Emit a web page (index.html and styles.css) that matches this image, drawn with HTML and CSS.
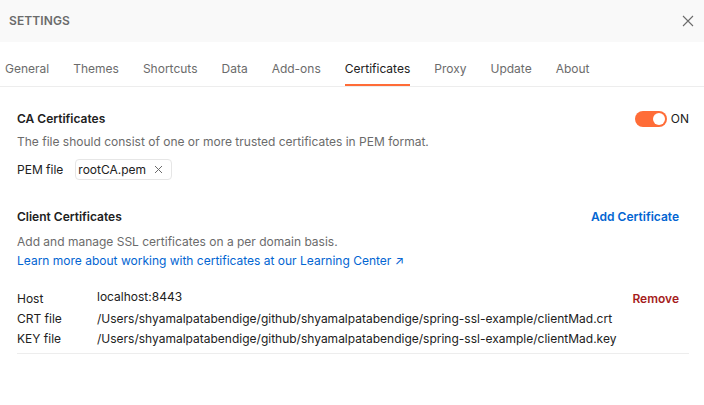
FILE: index.html
```html
<!DOCTYPE html>
<html>
<head>
<meta charset="utf-8">
<link rel="stylesheet" href="styles.css">
</head>
<body>
<div class="modal">
  <header class="header">
    <span class="header-title">SETTINGS</span>
    <button class="close" aria-label="Close">
      <svg width="12" height="12" viewBox="0 0 12 12"><path d="M1 1L11 11M11 1L1 11" stroke="#6b6b6b" stroke-width="1.1" fill="none"/></svg>
    </button>
  </header>
  <nav class="tabs">
    <span class="tab">General</span>
    <span class="tab">Themes</span>
    <span class="tab">Shortcuts</span>
    <span class="tab">Data</span>
    <span class="tab">Add-ons</span>
    <span class="tab active">Certificates</span>
    <span class="tab">Proxy</span>
    <span class="tab">Update</span>
    <span class="tab">About</span>
  </nav>
  <main class="content">
    <section class="ca">
      <div class="section-head">
        <h2 class="section-title">CA Certificates</h2>
        <div class="toggle-wrap">
          <span class="toggle"><span class="knob"></span></span>
          <span class="toggle-label">ON</span>
        </div>
      </div>
      <p class="desc">The file should consist of one or more trusted certificates in PEM format.</p>
      <div class="pem-row">
        <span class="pem-label">PEM file</span>
        <span class="chip">rootCA.pem
          <svg class="chip-x" width="9" height="9" viewBox="0 0 9 9"><path d="M1 1L8 8M8 1L1 8" stroke="#6b6b6b" stroke-width="1" fill="none"/></svg>
        </span>
      </div>
    </section>
    <section class="client">
      <div class="section-head">
        <h2 class="section-title">Client Certificates</h2>
        <span class="add-btn">Add Certificate</span>
      </div>
      <p class="desc tight">Add and manage SSL certificates on a per domain basis.</p>
      <a class="link">Learn more about working with certificates at our Learning Center <span class="arrow">↗</span></a>
      <div class="cert">
        <div class="cert-grid">
          <span class="k">Host</span><span class="v host">localhost:8443</span>
          <span class="k">CRT file</span><span class="v">/Users/shyamalpatabendige/github/shyamalpatabendige/spring-ssl-example/clientMad.crt</span>
          <span class="k">KEY file</span><span class="v">/Users/shyamalpatabendige/github/shyamalpatabendige/spring-ssl-example/clientMad.key</span>
        </div>
        <span class="remove">Remove</span>
      </div>
    </section>
  </main>
</div>
</body>
</html>
```
FILE: styles.css
```css
* { box-sizing: border-box; }
html, body { margin: 0; padding: 0; background: #ffffff; }
body {
  font-family: Inter, "Noto Sans", sans-serif;
  font-size: 12px;
  color: #212121;
  width: 704px;
  height: 405px;
  overflow: hidden;
}
.header {
  height: 42px;
  background: #f9f9f9;
  display: flex;
  align-items: center;
  justify-content: space-between;
  padding: 0 10px 0 9px;
}
.header-title {
  font-size: 12px;
  font-weight: 600;
  color: #6b6b6b;
  letter-spacing: 0.1px;
  line-height: 16px;
}
.close {
  border: 0;
  background: none;
  padding: 0;
  width: 12px;
  height: 12px;
  display: flex;
}
.tabs {
  display: flex;
  gap: 24px;
  padding-left: 5px;
  border-bottom: 1px solid #ededed;
  height: 45px;
}
.tab {
  padding-top: 19px;
  line-height: 15px;
  height: 44px;
  color: #6b6b6b;
  border-bottom: 2px solid transparent;
  font-size: 12px;
}
.tab.active {
  color: #212121;
  border-bottom-color: #ff6c37;
}
.content {
  padding: 22px 15px 0 17px;
}
.section-head {
  display: flex;
  justify-content: space-between;
  align-items: center;
  height: 20px;
}
.section-title {
  margin: 0;
  font-size: 12px;
  font-weight: 600;
  line-height: 20px;
  color: #212121;
}
.toggle-wrap {
  display: flex;
  align-items: center;
  gap: 4px;
}
.toggle {
  width: 32px;
  height: 16px;
  border-radius: 8px;
  background: #ff6c37;
  position: relative;
  display: block;
}
.knob {
  position: absolute;
  right: 2px;
  top: 2px;
  width: 12px;
  height: 12px;
  border-radius: 50%;
  background: #ffffff;
}
.toggle-label {
  line-height: 16px;
  color: #212121;
}
.desc {
  margin: 3px 0 0;
  line-height: 20px;
  color: #6b6b6b;
}
.desc.tight {
  margin-top: 6px;
  line-height: 18px;
}
.pem-row {
  display: flex;
  align-items: center;
  gap: 12px;
  margin-top: 7px;
}
.pem-label { line-height: 20px; }
.chip {
  display: inline-flex;
  align-items: center;
  gap: 8px;
  height: 21px;
  padding: 0 8px 0 2px;
  border: 1px solid #e6e6e6;
  border-radius: 4px;
  line-height: 19px;
}
.chip-x { display: block; }
.client { margin-top: 27px; }
.add-btn {
  color: #0265d2;
  font-weight: 600;
  margin-right: 10px;
  line-height: 20px;
}
.link {
  display: block;
  color: #0265d2;
  line-height: 18px;
  margin-top: 1px;
}
.arrow { font-size: 12px; }
.cert {
  margin-top: 19px;
  display: flex;
  justify-content: space-between;
  align-items: flex-start;
  padding-bottom: 4px;
  border-bottom: 1px solid #ededed;
}
.cert-grid {
  display: grid;
  grid-template-columns: 80px auto;
  line-height: 20px;
  white-space: nowrap;
}
.v.host { position: relative; top: -2px; }
.remove {
  color: #a51c1c;
  font-weight: 600;
  line-height: 20px;
  margin-right: 10px;
}
```
